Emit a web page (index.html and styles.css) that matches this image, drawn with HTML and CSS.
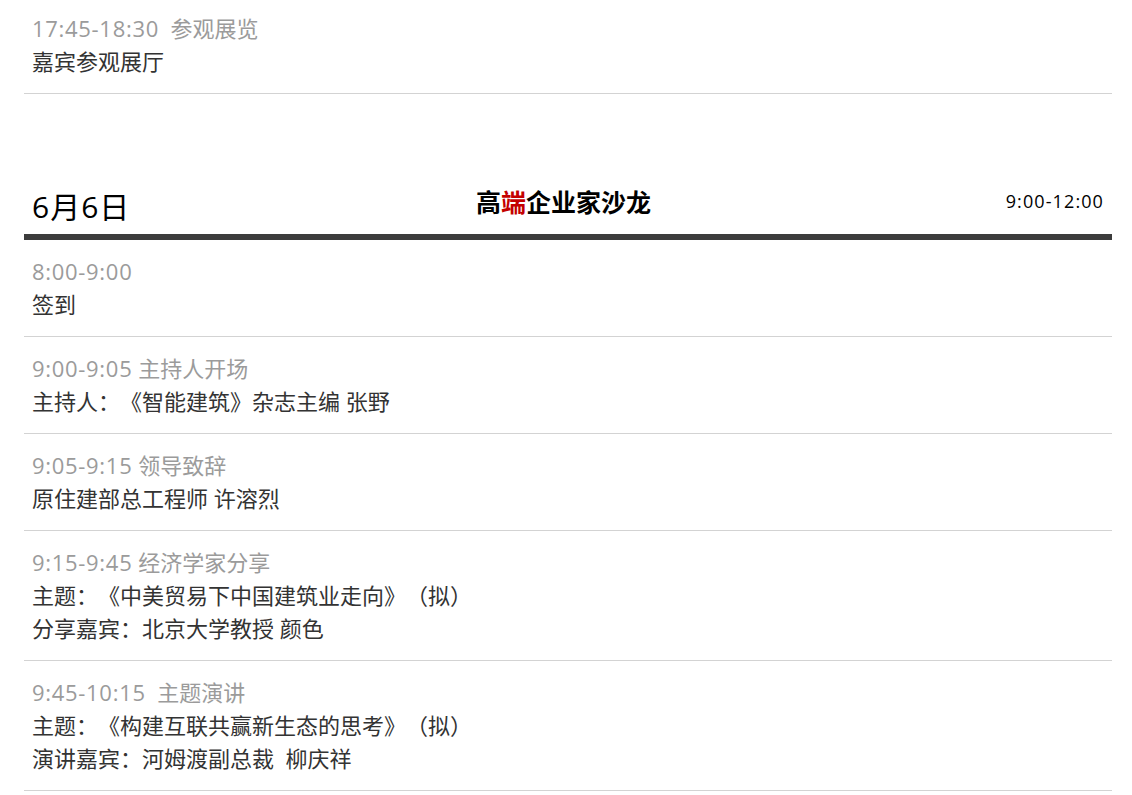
FILE: index.html
```html
<!DOCTYPE html>
<html lang="zh-CN">
<head>
<meta charset="utf-8">
<title>日程</title>
<link rel="stylesheet" href="styles.css">
</head>
<body>
<div class="agenda">
  <div class="item item--first">
    <div class="item__head"><span class="item__time">17:45-18:30</span>&nbsp;&nbsp;参观展览</div>
    <div class="item__text">嘉宾参观展厅</div>
  </div>

  <div class="day">
    <div class="day__date">6月6日</div>
    <div class="day__title">高<span class="day__accent">端</span>企业家沙龙</div>
    <div class="day__time">9:00-12:00</div>
  </div>

  <div class="item">
    <div class="item__head"><span class="item__time">8:00-9:00</span></div>
    <div class="item__text">签到</div>
  </div>
  <div class="item">
    <div class="item__head"><span class="item__time">9:00-9:05</span> 主持人开场</div>
    <div class="item__text">主持人：《智能建筑》杂志主编 张野</div>
  </div>
  <div class="item">
    <div class="item__head"><span class="item__time">9:05-9:15</span> 领导致辞</div>
    <div class="item__text">原住建部总工程师 许溶烈</div>
  </div>
  <div class="item">
    <div class="item__head"><span class="item__time">9:15-9:45</span> 经济学家分享</div>
    <div class="item__text">主题：《中美贸易下中国建筑业走向》（拟）</div>
    <div class="item__text">分享嘉宾：北京大学教授 颜色</div>
  </div>
  <div class="item">
    <div class="item__head"><span class="item__time">9:45-10:15</span>&nbsp;&nbsp;主题演讲</div>
    <div class="item__text">主题：《构建互联共赢新生态的思考》（拟）</div>
    <div class="item__text">演讲嘉宾：河姆渡副总裁&nbsp;&nbsp;柳庆祥</div>
  </div>
</div>
</body>
</html>
```

FILE: styles.css
```css
html, body {
  margin: 0;
  padding: 0;
  background: #ffffff;
}

body {
  font-family: "Open Sans", "Noto Sans CJK SC", sans-serif;
  padding: 0 20px 0 24px;
  text-spacing-trim: space-all;
}

.agenda {
  display: flex;
  flex-direction: column;
}

.item {
  padding: 15px 8px;
  border-bottom: 1px solid #d3d3d3;
  font-size: 22px;
  line-height: 33px;
}

.item--first {
  padding-top: 12px;
}

.item__head {
  color: #9b9b9b;
}

.item__time {
  letter-spacing: 0.7px;
}

.item__text {
  color: #333333;
}

.day {
  margin-top: 86px;
  height: 48px;
  padding: 6px 8px 0;
  display: flex;
  justify-content: space-between;
  align-items: flex-start;
  border-bottom: 6px solid #3c3c3c;
  color: #000000;
}

.day__date {
  font-size: 30px;
  line-height: 42px;
  letter-spacing: 1px;
}

.day__title {
  font-family: "Noto Sans CJK SC", sans-serif;
  font-weight: 700;
  font-size: 25px;
  line-height: 32px;
  margin-top: -1px;
  margin-right: 9px;
}

.day__accent {
  color: #c40000;
}

.day__time {
  font-size: 18px;
  line-height: 26px;
  letter-spacing: 1.1px;
  margin-top: 2px;
}
```
